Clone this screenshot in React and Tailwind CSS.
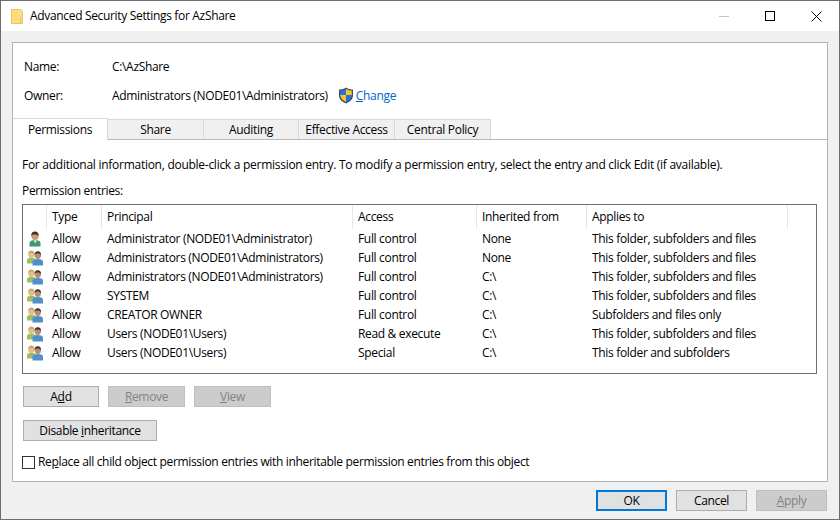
const rows = [
  ['one', 'Allow', 'Administrator (NODE01\\Administrator)', 'Full control', 'None', 'This folder, subfolders and files'],
  ['two', 'Allow', 'Administrators (NODE01\\Administrators)', 'Full control', 'None', 'This folder, subfolders and files'],
  ['two', 'Allow', 'Administrators (NODE01\\Administrators)', 'Full control', 'C:\\', 'This folder, subfolders and files'],
  ['two', 'Allow', 'SYSTEM', 'Full control', 'C:\\', 'This folder, subfolders and files'],
  ['two', 'Allow', 'CREATOR OWNER', 'Full control', 'C:\\', 'Subfolders and files only'],
  ['two', 'Allow', 'Users (NODE01\\Users)', 'Read & execute', 'C:\\', 'This folder, subfolders and files'],
  ['two', 'Allow', 'Users (NODE01\\Users)', 'Special', 'C:\\', 'This folder and subfolders'],
]

const cols = [
  { w: 'w-[24px]', label: '' },
  { w: 'w-[55px]', label: 'Type' },
  { w: 'w-[251px]', label: 'Principal' },
  { w: 'w-[124px]', label: 'Access' },
  { w: 'w-[110px]', label: 'Inherited from' },
  { w: 'w-[201px]', label: 'Applies to' },
]

const tabs = [
  { label: 'Share', w: 'w-[96px]' },
  { label: 'Auditing', w: 'w-[95px]' },
  { label: 'Effective Access', w: 'w-[96px]' },
  { label: 'Central Policy', w: 'w-[96px]' },
]

function FolderIcon() {
  return (
    <svg width="14" height="17" viewBox="0 0 14 17">
      <path d="M1.5 1.5H10.5L12.5 3V15.5H1.5Z" fill="#fcdc7e" stroke="#e8c660" />
      <path d="M10.5 15.5V10.5H12.5" fill="none" stroke="#e8c660" />
    </svg>
  )
}

function ShieldIcon() {
  return (
    <svg width="16" height="17" viewBox="0 0 16 17">
      <path d="M8 0.5C6 2 3.5 2.6 1 2.6V8.5C1 12 4 15 8 16.5C12 15 15 12 15 8.5V2.6C12.5 2.6 10 2 8 0.5Z" fill="#3f4f68" />
      <path d="M8 2C6.3 3.1 4.3 3.6 2.2 3.7V8H8Z" fill="#2277d6" />
      <path d="M8 2C9.7 3.1 11.7 3.6 13.8 3.7V8H8Z" fill="#fbc52c" />
      <path d="M2.2 8H8V15C5 13.8 2.4 11.3 2.2 8Z" fill="#fbc52c" />
      <path d="M13.8 8H8V15C11 13.8 13.6 11.3 13.8 8Z" fill="#2277d6" />
    </svg>
  )
}

function UserIcon() {
  return (
    <svg width="16" height="16" viewBox="0 0 16 16">
      <path d="M2.5 15.5V12C2.5 10 5 9 8 9C11 9 13.5 10 13.5 12V15.5Z" fill="#3c9a72" />
      <path d="M6.5 9.2H10L8.3 12.5Z" fill="#e6e6e6" />
      <ellipse cx="8" cy="5" rx="3.6" ry="4" fill="#c99a7c" />
      <path d="M4.3 5C4 2 6 0.6 8 0.6C10.2 0.6 11.9 2.2 11.6 5.2C10.8 3.8 9.2 3.4 7.6 3.4C6.2 3.4 5 3.8 4.3 5Z" fill="#3a3230" />
    </svg>
  )
}

function UsersIcon() {
  return (
    <svg width="16" height="16" viewBox="0 0 16 16">
      <path d="M0 13.5V10C0 8.5 2 7.8 4.5 7.8C7 7.8 8.5 8.5 8.5 10V13.5Z" fill="#9cbf60" />
      <ellipse cx="4.3" cy="4.4" rx="3.1" ry="3.5" fill="#e0bf8e" />
      <path d="M1.2 4.2C1 1.8 2.8 0.6 4.4 0.6C6.2 0.6 7.6 1.8 7.4 4.2C6.4 3 5 2.7 4.2 2.7C3.2 2.7 2 3 1.2 4.2Z" fill="#c9a860" />
      <path d="M5.5 15.5V11.5C5.5 9.8 8 9 10.8 9C13.5 9 16 9.8 16 11.5V15.5Z" fill="#4f8fcc" />
      <ellipse cx="10.8" cy="5.2" rx="3.2" ry="3.7" fill="#b98d72" />
      <path d="M7.6 5C7.4 2.4 9 1.2 10.8 1.2C12.7 1.2 14.2 2.6 14 5.2C13.1 3.8 11.8 3.4 10.6 3.4C9.4 3.4 8.4 3.8 7.6 5Z" fill="#3d3633" />
    </svg>
  )
}

function Btn({ children, disabled, className }) {
  return (
    <button className={`h-[21px] border flex items-center justify-center ${disabled ? 'bg-[#cccccc] border-[#bfbfbf] text-[#838383]' : 'bg-[#e1e1e1] border-[#adadad] text-black'} ${className}`}>
      {children}
    </button>
  )
}

export default function App() {
  return (
    <div className="w-[840px] h-[520px] overflow-hidden bg-[#f0f0f0] border border-[#6d6d6d] flex flex-col text-[12px] text-black font-['Open_Sans','Noto_Sans',sans-serif] tracking-[-0.33px]">
      {/* title bar */}
      <div className="h-[30px] bg-white flex items-center shrink-0">
        <div className="ml-[9px] w-[20px] flex"><FolderIcon /></div>
        <span>Advanced Security Settings for AzShare</span>
        <div className="ml-auto flex items-center">
          <div className="w-[46px] h-[30px] flex items-center justify-center"><div className="w-[10px] h-px bg-[#c4c4c4]" /></div>
          <div className="w-[46px] h-[30px] flex items-center justify-center"><div className="w-[10px] h-[10px] border border-black" /></div>
          <div className="w-[46px] h-[30px] flex items-center justify-center">
            <svg width="11" height="11" viewBox="0 0 11 11"><path d="M0.5 0.5L10.5 10.5M10.5 0.5L0.5 10.5" stroke="#000" strokeWidth="1" /></svg>
          </div>
        </div>
      </div>

      <div className="flex-1 px-[11px] pt-[11px] flex flex-col">
        {/* main panel */}
        <div className="h-[440px] bg-white border border-[#b4b4b4] flex flex-col">
          <div className="pl-[11px] pt-[14px]">
            <div className="h-[19px] flex items-center"><span className="w-[88px]">Name:</span><span>C:\AzShare</span></div>
            <div className="mt-[10px] h-[19px] flex items-center">
              <span className="w-[88px]">Owner:</span>
              <span>Administrators (NODE01\Administrators)</span>
              <span className="ml-[10px] flex"><ShieldIcon /></span>
              <span className="ml-[2px] text-[#0066cc]"><u>C</u>hange</span>
            </div>
          </div>

          {/* tabs */}
          <div className="mt-[13px] h-[22px] flex">
            <div className="w-[95px] h-[22px] bg-white border-t border-r border-[#d9d9d9] flex items-center justify-center relative z-10">Permissions</div>
            <div className="flex-1 flex items-end border-b border-[#b9b9b9] h-[21px] self-end">
              {tabs.map((t) => (
                <div key={t.label} className={`${t.w} h-[20px] bg-[#f0f0f0] border-t border-r border-[#d9d9d9] flex items-center justify-center whitespace-nowrap`}>{t.label}</div>
              ))}
            </div>
          </div>

          <div className="pl-[9px] pr-[10px] flex-1">
            <p className="mt-[16px] h-[17px] leading-[17px] whitespace-nowrap tracking-[-0.27px]">For additional information, double-click a permission entry. To modify a permission entry, select the entry and click Edit (if available).</p>
            <p className="mt-[9px] h-[17px] leading-[17px]">Permission entries:</p>

            {/* list */}
            <div className="mt-[5px] h-[170px] border border-[#6f6f6f]">
              <div className="h-[24px] flex">
                {cols.map((c) => (
                  <div key={c.label} className={`${c.w} h-[24px] border-r border-[#e5e5e5] pl-[5px] flex items-center whitespace-nowrap`}>{c.label}</div>
                ))}
              </div>
              <div>
                {rows.map((r, i) => (
                  <div key={i} className="h-[19px] flex items-center whitespace-nowrap">
                    <div className="w-[24px] pl-[4px] flex">{r[0] === 'one' ? <UserIcon /> : <UsersIcon />}</div>
                    <div className="w-[55px] pl-[5px]">{r[1]}</div>
                    <div className="w-[251px] pl-[5px]">{r[2]}</div>
                    <div className="w-[124px] pl-[5px]">{r[3]}</div>
                    <div className="w-[110px] pl-[5px]">{r[4]}</div>
                    <div className="w-[201px] pl-[5px]">{r[5]}</div>
                  </div>
                ))}
              </div>
            </div>

            <div className="mt-[12px] ml-px flex gap-[9px]">
              <Btn className="w-[76px]"><span>A<u>d</u>d</span></Btn>
              <Btn disabled className="w-[77px]"><span><u>R</u>emove</span></Btn>
              <Btn disabled className="w-[77px]"><span><u>V</u>iew</span></Btn>
            </div>
            <div className="mt-[13px] ml-px">
              <Btn className="w-[134px]"><span>Disable <u>i</u>nheritance</span></Btn>
            </div>
            <div className="mt-[12px] flex items-center whitespace-nowrap">
              <div className="w-[13px] h-[13px] border border-[#333333] bg-white" />
              <span className="ml-[3px]">Re<u>p</u>lace all child object permission entries with inheritable permission entries from this object</span>
            </div>
          </div>
        </div>

        {/* footer */}
        <div className="mt-[8px] pr-px flex justify-end gap-[9px]">
          <Btn className="w-[71px] !border-2 !border-[#0078d7]">OK</Btn>
          <Btn className="w-[71px]">Cancel</Btn>
          <Btn disabled className="w-[71px]"><span><u>A</u>pply</span></Btn>
        </div>
      </div>
    </div>
  )
}
